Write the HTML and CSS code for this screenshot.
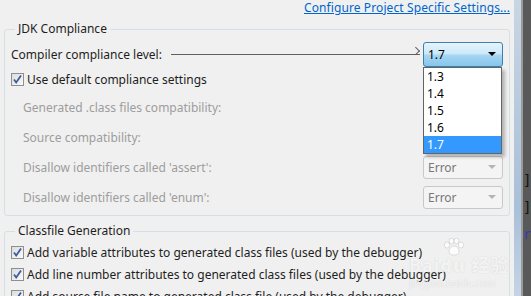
FILE: index.html
```html
<!DOCTYPE html>
<html lang="en">

<head>
    <meta charset="UTF-8">
    <title>Java Compiler</title>
    <link rel="stylesheet" href="styles.css">
</head>

<body>
    <div class="main">
        <div class="top-row">
            <a class="link" href="#">Configure Project Specific Settings...</a>
        </div>

        <fieldset class="group">
            <legend>JDK Compliance</legend>
            <div class="row row-first">
                <span class="label">Compiler compliance level:</span>
                <span class="pointer"></span>
                <div class="combo combo-open">
                    <span>1.7</span>
                    <span class="arrow"></span>
                    <ul class="drop-list">
                        <li>1.3</li>
                        <li>1.4</li>
                        <li>1.5</li>
                        <li>1.6</li>
                        <li class="selected">1.7</li>
                    </ul>
                </div>
            </div>
            <div class="row row-check">
                <span class="check"><svg width="13" height="13" viewBox="0 0 13 13"><path d="M3 6.5 L5.2 9.5 L10 2.5" fill="none" stroke="#3d5c9c" stroke-width="1.8"/></svg></span>
                <span class="label">Use default compliance settings</span>
            </div>
            <!-- the combos of these two rows are hidden under the open list -->
            <div class="row row-sub">
                <span class="label disabled">Generated .class files compatibility:</span>
            </div>
            <div class="row row-sub">
                <span class="label disabled">Source compatibility:</span>
            </div>
            <div class="row row-sub">
                <span class="label disabled">Disallow identifiers called 'assert':</span>
                <div class="combo combo-off"><span>Error</span><span class="arrow"></span></div>
            </div>
            <div class="row row-sub">
                <span class="label disabled">Disallow identifiers called 'enum':</span>
                <div class="combo combo-off"><span>Error</span><span class="arrow"></span></div>
            </div>
        </fieldset>

        <fieldset class="group group-second">
            <legend>Classfile Generation</legend>
            <div class="row row-gen">
                <span class="check"><svg width="13" height="13" viewBox="0 0 13 13"><path d="M3 6.5 L5.2 9.5 L10 2.5" fill="none" stroke="#3d5c9c" stroke-width="1.8"/></svg></span>
                <span class="label">Add variable attributes to generated class files (used by the debugger)</span>
            </div>
            <div class="row row-gen">
                <span class="check"><svg width="13" height="13" viewBox="0 0 13 13"><path d="M3 6.5 L5.2 9.5 L10 2.5" fill="none" stroke="#3d5c9c" stroke-width="1.8"/></svg></span>
                <span class="label">Add line number attributes to generated class files (used by the debugger)</span>
            </div>
            <div class="row row-gen">
                <span class="check"><svg width="13" height="13" viewBox="0 0 13 13"><path d="M3 6.5 L5.2 9.5 L10 2.5" fill="none" stroke="#3d5c9c" stroke-width="1.8"/></svg></span>
                <span class="label">Add source file name to generated class file (used by the debugger)</span>
            </div>
            <div class="watermark">
                <svg class="paw" width="22" height="18" viewBox="0 0 22 18">
                    <g fill="rgba(255,255,255,0.8)" stroke="rgba(150,150,150,0.35)" stroke-width="0.8">
                        <ellipse cx="4" cy="7" rx="2.6" ry="3"/>
                        <ellipse cx="8.5" cy="3" rx="2.4" ry="2.8"/>
                        <ellipse cx="13.5" cy="3" rx="2.4" ry="2.8"/>
                        <ellipse cx="18" cy="7" rx="2.6" ry="3"/>
                        <path d="M11 8 C7 8 5 13 6.5 15.5 C8 17.5 14 17.5 15.5 15.5 C17 13 15 8 11 8 Z"/>
                    </g>
                </svg>
                <span class="wm-big">Bai<b>du</b> 经验</span>
                <span class="wm-small">jingyan.baidu.com</span>
            </div>
        </fieldset>
    </div>

    <div class="edge">
        <div class="edge-frame"></div>
        <div class="edge-line"></div>
        <div class="edge-dark">
            <span class="edge-code">]</span>
            <span class="edge-code">]</span>
            <span class="edge-code blue">r</span>
        </div>
    </div>
</body>

</html>
```

FILE: styles.css
```css
/* window */
html,
body {
    margin: 0;
    padding: 0;
    height: 296px;
    overflow: hidden;
}

body {
    display: flex;
    background-color: #f0f0f0;
    font-family: "Noto Sans", "Noto Sans CJK SC", sans-serif;
    font-size: 12px;
    color: #1e1e1e;
}

.main {
    width: 514px;
    height: 296px;
    overflow: hidden;
    flex: none;
}

.top-row {
    height: 21px;
    display: flex;
    justify-content: flex-end;
    align-items: flex-start;
    padding-right: 4px;
}

.link {
    color: #0066cc;
    text-decoration: underline;
    line-height: 15px;
    letter-spacing: 0.1px;
}

/* group boxes */
.group {
    position: relative;
    margin: 0 0 0 4px;
    width: 492px;
    padding: 5px 6px 3px 6px;
    border: 1px solid #d5dfe5;
    border-radius: 3px;
    min-width: 0;
}

.group legend {
    padding: 0 3px;
    margin-left: 4px;
    line-height: 16px;
}

.group-second {
    margin-top: 7px;
    padding-top: 2px;
}

.row {
    display: flex;
    align-items: center;
}

.row-first {
    height: 24px;
}

.row-check {
    height: 26px;
}

.row-sub {
    height: 30px;
    padding-left: 12px;
}

.row-gen {
    height: 22px;
}

.label {
    white-space: nowrap;
}

.disabled {
    color: #9d9d9d;
}

/* pointer line from label to combo */
.pointer {
    flex: 1;
    position: relative;
    height: 1px;
    background: #606060;
    margin: 0 3px 0 9px;
}

.pointer::after {
    content: "";
    position: absolute;
    right: 0;
    top: -3px;
    width: 5px;
    height: 5px;
    border-top: 1px solid #606060;
    border-right: 1px solid #606060;
    transform: rotate(45deg);
    transform-origin: 100% 0;
}

/* combos */
.combo {
    position: relative;
    box-sizing: border-box;
    width: 80px;
    height: 23px;
    margin-left: auto;
    display: flex;
    align-items: center;
    padding-left: 4px;
    border-radius: 3px;
    flex: none;
}

.combo-open {
    height: 25px;
    border: 1px solid #3c7fb1;
    background: linear-gradient(to bottom, #e6f4fc 0%, #cde9f8 45%, #a4d5f2 55%, #86c6ec 100%);
    color: #000;
}

.combo-off {
    border: 1px solid #c8c8c8;
    background: #f4f4f4;
    color: #777;
}

.arrow {
    position: absolute;
    right: 6px;
    top: 50%;
    margin-top: -2px;
    width: 0;
    height: 0;
    border-left: 4px solid transparent;
    border-right: 4px solid transparent;
    border-top: 4px solid #000;
}

.combo-off .arrow {
    border-top-color: #b4b4b4;
}

/* open drop-down list */
.drop-list {
    position: absolute;
    z-index: 5;
    left: -1px;
    top: 24px;
    box-sizing: border-box;
    width: 79px;
    margin: 0;
    padding: 0;
    list-style: none;
    background: #fff;
    border: 1px solid #646464;
    box-shadow: 3px 3px 3px rgba(0, 0, 0, 0.25);
}

.drop-list li {
    height: 17px;
    line-height: 17px;
    padding-left: 3px;
    color: #000;
}

.drop-list .selected {
    background: #3399ff;
    color: #fff;
}

/* checkboxes */
.check {
    width: 13px;
    height: 13px;
    box-sizing: border-box;
    border: 1px solid #8e8f8f;
    background: linear-gradient(135deg, #dcdcdc, #fafafa);
    margin-right: 3px;
    flex: none;
    display: flex;
}

.check svg {
    margin: -1px;
}

/* watermark */
.watermark {
    position: absolute;
    right: 4px;
    top: -1px;
    width: 96px;
    display: flex;
    flex-direction: column;
    align-items: flex-start;
    color: rgba(255, 255, 255, 0.8);
    text-shadow: 0 0 1px rgba(120, 120, 120, 0.35);
    pointer-events: none;
}

.paw {
    margin-left: 34px;
}

.wm-big {
    font-size: 18px;
    font-weight: bold;
    line-height: 18px;
    letter-spacing: 1px;
    white-space: nowrap;
}

.wm-small {
    margin-top: 4px;
    font-size: 10px;
    line-height: 10px;
    white-space: nowrap;
}

/* the edge of the window behind */
.edge {
    flex: 1;
    display: flex;
}

.edge-frame {
    width: 7px;
    background: linear-gradient(to bottom, #c8d6e4, #b6c9dc 40%, #a9c0da 70%, #c5d4e4);
}

.edge-line {
    width: 2px;
    background: #9a9a9a;
}

.edge-dark {
    flex: 1;
    background: #595959;
    display: flex;
    flex-direction: column;
    padding-top: 172px;
}

.edge-code {
    font-family: "DejaVu Sans Mono", monospace;
    font-size: 14px;
    line-height: 16px;
    height: 27px;
    color: #111;
}

.blue {
    color: #3a3ab0;
}
```
